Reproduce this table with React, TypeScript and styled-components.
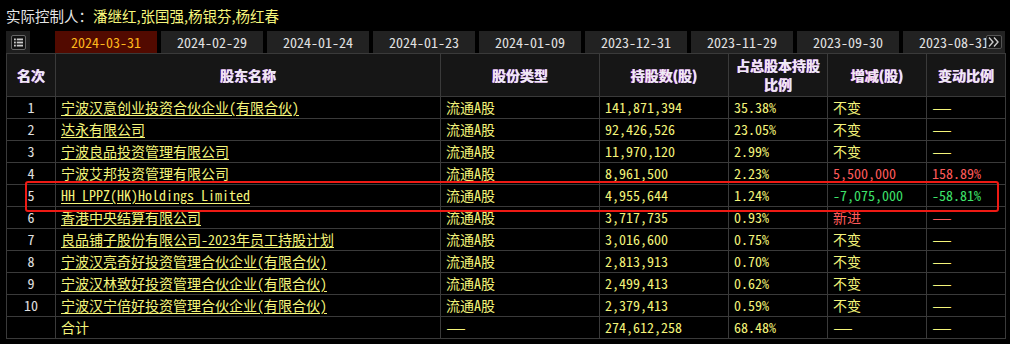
import React from 'react';
import styled, { createGlobalStyle } from 'styled-components';

const GlobalStyle = createGlobalStyle`
  html, body {
    margin: 0;
    padding: 0;
    background: #000;
  }
  body {
    font-family: "Noto Sans CJK SC", "Liberation Sans", sans-serif;
  }
`;

const CELL_FONT = `"Noto Sans Mono CJK SC", "Liberation Mono", "Noto Sans CJK SC", monospace`;

type Tone = 'yellow' | 'red' | 'green';

interface Holder {
  rank: string;
  name: string;
  type: string;
  shares: string;
  pct: string;
  change: string;
  changeTone: Tone;
  ratio: string;
  ratioTone: Tone;
}

const dates = [
  '2024-03-31',
  '2024-02-29',
  '2024-01-24',
  '2024-01-23',
  '2024-01-09',
  '2023-12-31',
  '2023-11-29',
  '2023-09-30',
  '2023-08-31',
];

const holders: Holder[] = [
  { rank: '1', name: '宁波汉意创业投资合伙企业(有限合伙)', type: '流通A股', shares: '141,871,394', pct: '35.38%', change: '不变', changeTone: 'yellow', ratio: '—', ratioTone: 'yellow' },
  { rank: '2', name: '达永有限公司', type: '流通A股', shares: '92,426,526', pct: '23.05%', change: '不变', changeTone: 'yellow', ratio: '—', ratioTone: 'yellow' },
  { rank: '3', name: '宁波良品投资管理有限公司', type: '流通A股', shares: '11,970,120', pct: '2.99%', change: '不变', changeTone: 'yellow', ratio: '—', ratioTone: 'yellow' },
  { rank: '4', name: '宁波艾邦投资管理有限公司', type: '流通A股', shares: '8,961,500', pct: '2.23%', change: '5,500,000', changeTone: 'red', ratio: '158.89%', ratioTone: 'red' },
  { rank: '5', name: 'HH LPPZ(HK)Holdings Limited', type: '流通A股', shares: '4,955,644', pct: '1.24%', change: '-7,075,000', changeTone: 'green', ratio: '-58.81%', ratioTone: 'green' },
  { rank: '6', name: '香港中央结算有限公司', type: '流通A股', shares: '3,717,735', pct: '0.93%', change: '新进', changeTone: 'red', ratio: '—', ratioTone: 'red' },
  { rank: '7', name: '良品铺子股份有限公司-2023年员工持股计划', type: '流通A股', shares: '3,016,600', pct: '0.75%', change: '不变', changeTone: 'yellow', ratio: '—', ratioTone: 'yellow' },
  { rank: '8', name: '宁波汉亮奇好投资管理合伙企业(有限合伙)', type: '流通A股', shares: '2,813,913', pct: '0.70%', change: '不变', changeTone: 'yellow', ratio: '—', ratioTone: 'yellow' },
  { rank: '9', name: '宁波汉林致好投资管理合伙企业(有限合伙)', type: '流通A股', shares: '2,499,413', pct: '0.62%', change: '不变', changeTone: 'yellow', ratio: '—', ratioTone: 'yellow' },
  { rank: '10', name: '宁波汉宁倍好投资管理合伙企业(有限合伙)', type: '流通A股', shares: '2,379,413', pct: '0.59%', change: '不变', changeTone: 'yellow', ratio: '—', ratioTone: 'yellow' },
];

const toneColor: Record<Tone, string> = {
  yellow: '#f4f47a',
  red: '#ff5a5a',
  green: '#3ee36a',
};

// the dash is drawn full width, like a CJK glyph
const cellText = (s: string) => (s === '—' ? <StyledDash>—</StyledDash> : s);

const App: React.FC = () => {
  return (
    <StyledPage>
      <GlobalStyle />
      <StyledController>
        实际控制人：<StyledNames>潘继红,张国强,杨银芬,杨红春</StyledNames>
      </StyledController>

      <StyledTabBar>
        <StyledMenuSlot>
          <StyledMenuIcon viewBox="0 0 15 15">
            <rect x="0.5" y="0.5" width="14" height="14" rx="1.5" fill="#111" stroke="#666" />
            <rect x="3" y="3.5" width="1.8" height="1.8" fill="#ccc" />
            <rect x="3" y="6.6" width="1.8" height="1.8" fill="#ccc" />
            <rect x="3" y="9.7" width="1.8" height="1.8" fill="#ccc" />
            <rect x="5.8" y="3.5" width="6.2" height="1.8" fill="#ccc" />
            <rect x="5.8" y="6.6" width="6.2" height="1.8" fill="#ccc" />
            <rect x="5.8" y="9.7" width="6.2" height="1.8" fill="#ccc" />
          </StyledMenuIcon>
        </StyledMenuSlot>
        <StyledTabs>
          {dates.map((d, i) => (
            <StyledTab key={d} $active={i === 0}>{d}</StyledTab>
          ))}
        </StyledTabs>
        <StyledMore>
          <svg width="14" height="12" viewBox="0 0 14 12">
            <path d="M2 1.5 L6 6 L2 10.5 M7 1.5 L11 6 L7 10.5" fill="none" stroke="#ccc" strokeWidth="1.4" />
          </svg>
        </StyledMore>
      </StyledTabBar>

      <StyledTableWrap>
        <StyledTable>
          <colgroup>
            <col style={{ width: 49 }} />
            <col style={{ width: 385 }} />
            <col style={{ width: 159 }} />
            <col style={{ width: 129 }} />
            <col style={{ width: 99 }} />
            <col style={{ width: 99 }} />
            <col style={{ width: 79 }} />
          </colgroup>
          <thead>
            <tr>
              <StyledTh>名次</StyledTh>
              <StyledTh>股东名称</StyledTh>
              <StyledTh>股份类型</StyledTh>
              <StyledTh>持股数(股)</StyledTh>
              <StyledTh>占总股本持股<br />比例</StyledTh>
              <StyledTh>增减(股)</StyledTh>
              <StyledTh>变动比例</StyledTh>
            </tr>
          </thead>
          <tbody>
            {holders.map((h) => (
              <tr key={h.rank}>
                <StyledTd $center>{h.rank}</StyledTd>
                <StyledTd><StyledLink>{h.name}</StyledLink></StyledTd>
                <StyledTd>{h.type}</StyledTd>
                <StyledTd>{h.shares}</StyledTd>
                <StyledTd>{h.pct}</StyledTd>
                <StyledTd $tone={h.changeTone}>{cellText(h.change)}</StyledTd>
                <StyledTd $tone={h.ratioTone}>{cellText(h.ratio)}</StyledTd>
              </tr>
            ))}
            <tr>
              <StyledTd $center></StyledTd>
              <StyledTd>合计</StyledTd>
              <StyledTd>{cellText('—')}</StyledTd>
              <StyledTd>274,612,258</StyledTd>
              <StyledTd>68.48%</StyledTd>
              <StyledTd>{cellText('—')}</StyledTd>
              <StyledTd>{cellText('—')}</StyledTd>
            </tr>
          </tbody>
        </StyledTable>
        <StyledHighlight />
      </StyledTableWrap>
    </StyledPage>
  );
};

const StyledPage = styled.div`
  width: 1010px;
  height: 344px;
  background: #000;
  padding: 0 4px 0 6px;
  box-sizing: border-box;
  overflow: hidden;
`;

const StyledController = styled.div`
  height: 31px;
  display: flex;
  align-items: center;
  font-size: 14.5px;
  color: #e6e6e6;
  padding-bottom: 1px;
  box-sizing: border-box;
`;

const StyledNames = styled.span`
  color: #f6f67c;
`;

const StyledTabBar = styled.div`
  position: relative;
  display: flex;
  align-items: stretch;
  height: 22px;
`;

const StyledMenuSlot = styled.div`
  width: 24px;
  background: #1e1e1e;
  display: flex;
  align-items: center;
  justify-content: center;
  margin-right: 25px;
`;

const StyledMenuIcon = styled.svg`
  width: 15px;
  height: 15px;
`;

const StyledTabs = styled.div`
  flex: 1;
  display: flex;
  gap: 4px;
  overflow: hidden;
`;

const StyledTab = styled.div<{ $active?: boolean }>`
  flex: 0 0 102px;
  display: flex;
  align-items: center;
  justify-content: center;
  font-family: ${CELL_FONT};
  font-size: 14px;
  background: ${(p) => (p.$active ? '#520a00' : '#222')};
  color: ${(p) => (p.$active ? '#ffb81c' : '#e2e2e2')};
`;

const StyledMore = styled.div`
  position: absolute;
  right: 4px;
  top: 4px;
  width: 16px;
  height: 14px;
  border: 1px solid #555;
  border-radius: 2px;
  background: #151515;
  box-sizing: border-box;
  display: flex;
  align-items: center;
  justify-content: center;
`;

const StyledTableWrap = styled.div`
  position: relative;
  width: 1000px;
`;

const StyledTable = styled.table`
  width: 1000px;
  table-layout: fixed;
  border-collapse: collapse;
  border: 1px solid #3a3a3a;
  font-family: ${CELL_FONT};
  font-size: 14px;
`;

const StyledTh = styled.th`
  height: 42px;
  background: #161616;
  border: 1px solid #3a3a3a;
  color: #ececf4;
  font-family: "Noto Sans CJK SC", sans-serif;
  font-weight: 700;
  font-size: 14px;
  line-height: 19px;
  text-align: center;
  padding: 0;
  text-shadow: -0.6px 0 #ff4fb0, 0.6px 0 #4fa8ff;
`;

const StyledTd = styled.td<{ $center?: boolean; $tone?: Tone }>`
  height: 21px;
  padding: 0 0 0 5px;
  border: 1px solid #3a3a3a;
  background: #000;
  color: ${(p) => (p.$center ? '#e0e0e0' : toneColor[p.$tone ?? 'yellow'])};
  text-align: ${(p) => (p.$center ? 'center' : 'left')};
  white-space: nowrap;
  overflow: hidden;
  line-height: 21px;
  ${(p) => (p.$center ? 'padding: 0;' : '')}
`;

const StyledDash = styled.span`
  display: inline-block;
  font-family: "Noto Sans CJK SC", sans-serif;
  transform: scaleX(1.6);
  transform-origin: left center;
`;

const StyledLink = styled.span`
  text-decoration: underline;
  text-underline-offset: 2px;
`;

const StyledHighlight = styled.div`
  position: absolute;
  left: 19px;
  top: 128px;
  width: 970px;
  height: 27px;
  border: 2px solid #ee1a14;
  border-radius: 3px;
  pointer-events: none;
`;

export default App;
